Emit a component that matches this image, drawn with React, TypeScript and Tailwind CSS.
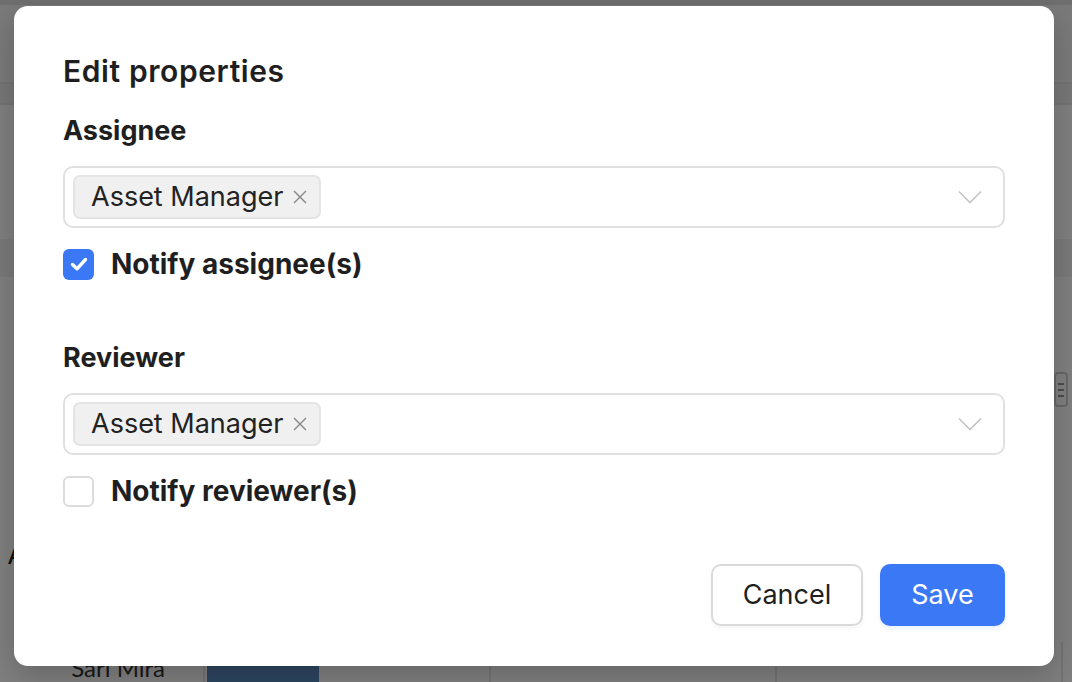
import React from "react";

function ChevronDown() {
  return (
    <svg className="h-[14px] w-[24px]" viewBox="0 0 24 14" fill="none" stroke="#c4c4c4" strokeWidth="1.6" aria-hidden="true">
      <path d="M1 1.5 12 12.5 23 1.5" />
    </svg>
  );
}

function TagClose() {
  return (
    <svg className="h-[14px] w-[14px]" viewBox="0 0 14 14" fill="none" stroke="#8a8a8a" strokeWidth="1.5" aria-hidden="true">
      <path d="M1 1 13 13" />
      <path d="M13 1 1 13" />
    </svg>
  );
}

function CheckGlyph() {
  return (
    <svg className="h-[20px] w-[20px]" viewBox="0 0 20 20" fill="none" stroke="white" strokeWidth="3.4" strokeLinecap="round" strokeLinejoin="round" aria-hidden="true">
      <path d="M3.5 10.5 8 14.8 16.5 5.5" />
    </svg>
  );
}

function AssignSelect({ value }: { value: string }) {
  return (
    <div className="flex h-[62px] items-center justify-between rounded-[10px] border-2 border-[#e0e0e0] bg-white pl-[8px] pr-[21px]">
      <span className="flex h-[44px] items-center gap-[10px] rounded-[7px] border-2 border-[#e4e4e4] bg-[#f0f0f0] pl-[16px] pr-[12px] text-[27px] text-[#222]">
        {value}
        <TagClose />
      </span>
      <ChevronDown />
    </div>
  );
}

function NotifyRow({ label, checked }: { label: string; checked: boolean }) {
  return (
    <label className="mt-[20px] flex items-center gap-[17px]">
      {checked ? (
        <span className="flex h-[31px] w-[31px] items-center justify-center rounded-[6px] bg-[#3b78f5]">
          <CheckGlyph />
        </span>
      ) : (
        <span className="h-[31px] w-[31px] rounded-[6px] border-2 border-[#dcdcdc] bg-white" />
      )}
      <span className="text-[28px] leading-[32px] font-bold text-[#1f1f1f]">{label}</span>
    </label>
  );
}

function BackdropPage() {
  return (
    <div className="flex h-[682px] w-[1072px] flex-col bg-white">
      <div className="h-[5px] bg-[#dedede]" />
      <div className="h-[79px] border-b-2 border-[#e6e6e6] bg-[#f4f4f4]" />
      <div className="h-[21px] border-b-2 border-[#e6e6e6] bg-[#efefef]" />
      <div className="h-[134px]" />
      <div className="h-[38px] bg-[#f3f3f3]" />
      <div className="flex flex-1 flex-col">
        <div className="flex h-[130px] justify-end pr-[4px] pt-[95px]">
          <span className="flex h-[35px] w-[14px] flex-col items-start justify-center gap-[4px] rounded-[4px] border-2 border-[#cfcfcf] pl-[2px]">
            <span className="h-[2px] w-[6px] bg-[#999]" />
            <span className="h-[2px] w-[6px] bg-[#999]" />
            <span className="h-[2px] w-[6px] bg-[#999]" />
          </span>
        </div>
        <div className="flex-1 pl-[8px] pt-[128px] font-['Lato',sans-serif] text-[26px] text-[#222]">A</div>
        <div className="flex h-[40px] items-end">
          <div className="flex h-[40px] w-[205px] items-end justify-end border-r-2 border-[#e6e6e6] pr-[38px] font-['Lato',sans-serif] text-[24px] leading-[28px] text-[#333]">
            Sari Mira
          </div>
          <div className="flex h-[40px] w-[286px] items-end border-r-2 border-[#e6e6e6] pl-[2px]">
            <div className="h-[16px] w-[112px] bg-[#5a8ac0]" />
          </div>
          <div className="h-[40px] w-[286px] border-r-2 border-[#e6e6e6]" />
          <div className="h-[40px] w-[286px] border-r-2 border-[#e6e6e6]" />
        </div>
      </div>
    </div>
  );
}

export default function App() {
  return (
    <div className="relative h-[682px] w-[1072px] overflow-hidden font-['Inter',sans-serif]">
      <BackdropPage />
      <div className="absolute inset-0 bg-black/50 pl-[14px] pt-[6px]">
        <div className="flex h-[660px] w-[1040px] flex-col rounded-[14px] bg-white px-[49px] pt-[47px] shadow-[0_10px_30px_rgba(0,0,0,0.2)]">
          <h2 className="text-[30px] leading-[36px] font-semibold tracking-[0.6px] text-[#1f1f1f]">Edit properties</h2>

          <h3 className="mt-[26px] text-[27px] leading-[32px] font-bold text-[#1f1f1f]">Assignee</h3>
          <div className="mt-[19px]">
            <AssignSelect value="Asset Manager" />
          </div>
          <NotifyRow label="Notify assignee(s)" checked />

          <h3 className="mt-[62px] text-[27px] leading-[32px] font-bold text-[#1f1f1f]">Reviewer</h3>
          <div className="mt-[19px]">
            <AssignSelect value="Asset Manager" />
          </div>
          <NotifyRow label="Notify reviewer(s)" checked={false} />

          <div className="mt-[57px] flex justify-end gap-[17px]">
            <button
              type="button"
              className="h-[62px] w-[152px] rounded-[10px] border-2 border-[#dadada] bg-white text-[27px] text-[#1f1f1f] shadow-[0_3px_4px_rgba(0,0,0,0.04)]"
            >
              Cancel
            </button>
            <button
              type="button"
              className="h-[62px] w-[125px] rounded-[10px] bg-[#3b78f5] text-[27px] text-white shadow-[0_3px_4px_rgba(59,120,245,0.1)]"
            >
              Save
            </button>
          </div>
        </div>
      </div>
    </div>
  );
}
